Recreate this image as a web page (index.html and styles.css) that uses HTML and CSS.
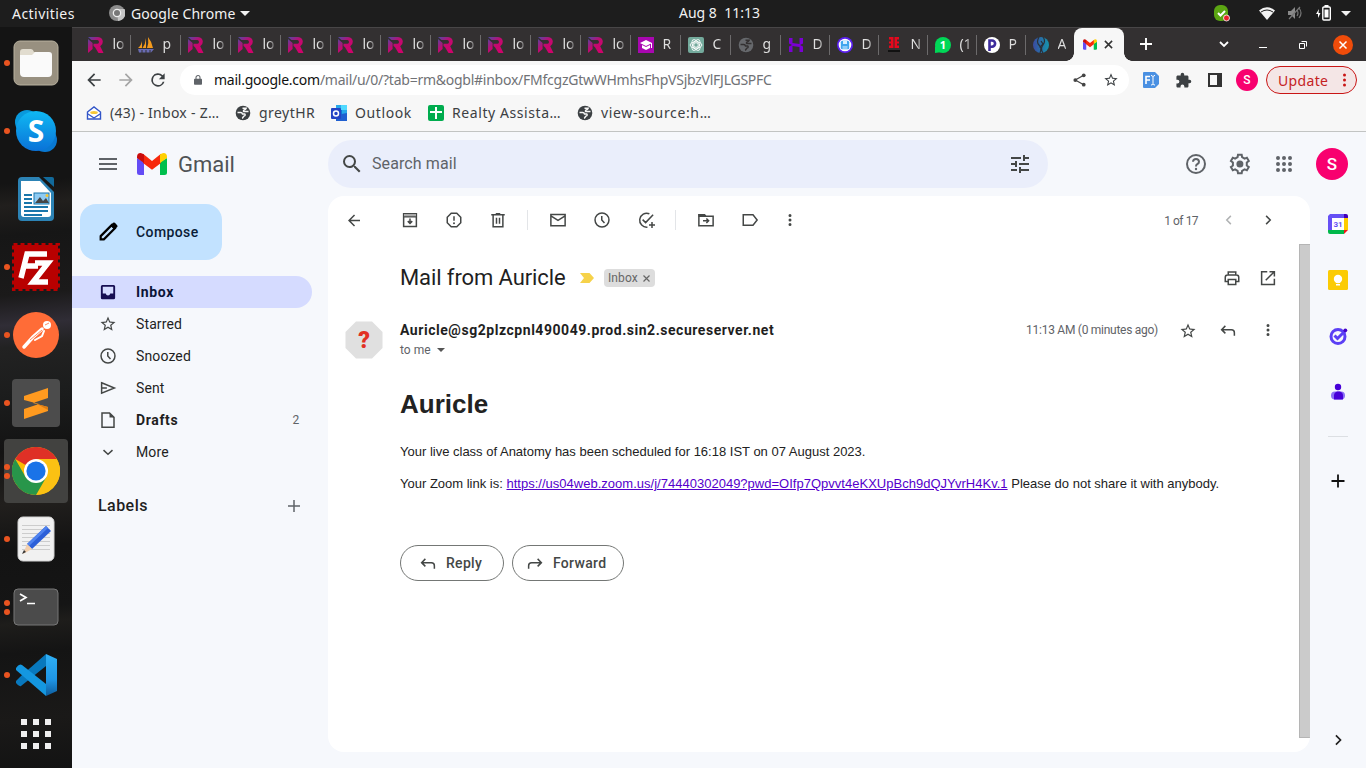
FILE: index.html
```html
<!DOCTYPE html>
<html lang="en">
<head>
<meta charset="utf-8">
<title>Mail from Auricle - Gmail</title>
<link rel="stylesheet" href="styles.css">
</head>
<body>
<svg class="defs" aria-hidden="true">
  <defs>
    <linearGradient id="rg" x1="0" y1="0" x2="1" y2="1"><stop offset="0" stop-color="#4a4ba6"/><stop offset=".45" stop-color="#c00a70"/><stop offset="1" stop-color="#d4006a"/></linearGradient>
    <linearGradient id="skype" x1="0" y1="0" x2="0" y2="1"><stop offset="0" stop-color="#0fb9f3"/><stop offset="1" stop-color="#0a72d8"/></linearGradient>
    <linearGradient id="auric"><stop offset="0" stop-color="#3b4aa0"/><stop offset="1" stop-color="#1594ad"/></linearGradient>
    <linearGradient id="code" x1="0" y1="0" x2="0" y2="1"><stop offset="0" stop-color="#2fb0f5"/><stop offset=".6" stop-color="#1f96e6"/><stop offset="1" stop-color="#0d5c9c"/></linearGradient>
  </defs>
  <symbol id="i-r" viewBox="0 0 16 16"><path fill="url(#rg)" fill-rule="evenodd" d="M0 0h10q4.800 .5 4.800 4.800 0 3.200-2.600 4.500l3.300 6.700h-5L7 10.300 5.500 9V6.700h4q1.500-.4 1.500-1.800T9.500 3.100H3.500zM0 2l4.600 4V12L0 16z"/></symbol>
  <symbol id="i-globe" viewBox="0 0 16 16"><circle cx="8" cy="8" r="7.300" fill="currentColor"/><path class="globe-land" d="M7.500 3.200h3.800q-.3 1.500-2.300 1.800-1 .8-.3 1.500h4.800M2.500 7.500h3.200q1.500 0 1.800 1.500h2q1 .3.500 1.500l-1.500 1q-.5 1.500-1.500 1.700"/></symbol>
  <symbol id="i-gm" viewBox="0 0 30 22"><path fill="#644cf5" d="M0 5 7 9v13H2.500Q0 22 0 19.500z"/><path fill="#00bf4d" d="m23 9 7-4v14.500q0 2.500-2.500 2.500H23z"/><path fill="#f7290c" d="M6 0.800 15 8l9-7.200V10l-9 6.800L6 10z"/><path fill="#c90c0c" d="M0 4Q0 0 3.500 0 5 0 7 1.500V10L0 5z"/><path fill="#ffd000" d="M30 4Q30 0 26.500 0 25 0 23 1.500V10l7-5z"/></symbol>
  <symbol id="i-back" viewBox="0 0 24 24"><path fill="currentColor" d="M20 11H7.830l5.590-5.590L12 4l-8 8 8 8 1.410-1.410L7.830 13H20v-2z"/></symbol>
  <symbol id="i-star" viewBox="0 0 24 24"><path fill="currentColor" d="M22 9.240l-7.190-.62L12 2 9.190 8.630 2 9.240l5.460 4.730L5.820 21 12 17.270 18.180 21l-1.630-7.030L22 9.240zM12 15.400l-3.760 2.270 1-4.280-3.320-2.880 4.380-.38L12 6.100l1.710 4.040 4.380.38-3.320 2.880 1 4.280L12 15.400z"/></symbol>
  <symbol id="i-clock" viewBox="0 0 24 24"><g class="line"><circle cx="12" cy="12" r="9.300"/><path d="M11.700 6.500V12l3.600 4"/></g></symbol>
  <symbol id="i-more" viewBox="0 0 24 24"><path fill="currentColor" d="M12 8a2 2 0 1 0 0-4 2 2 0 0 0 0 4zm0 2a2 2 0 1 0 0 4 2 2 0 0 0 0-4zm0 6a2 2 0 1 0 0 4 2 2 0 0 0 0-4z"/></symbol>
  <symbol id="i-right" viewBox="0 0 24 24"><path class="line" d="m9.500 6.500 5.500 5.500-5.500 5.500"/></symbol>
  <symbol id="i-reply" viewBox="0 0 24 24"><path class="line" d="M8.500 6.500 3.500 11.500l5 5M3.500 11.500h13q4 0 4 4v4"/></symbol>
  <symbol id="i-plus" viewBox="0 0 24 24"><path class="line" d="M12 4v16M4 12h16"/></symbol>
</svg>

<header class="topbar">
  <span class="activities">Activities</span>
  <svg class="tb-chrome" viewBox="0 0 16 16"><circle cx="8" cy="8" r="8" fill="#8c8c8c"/><path d="M8 4h7.500A8 8 0 0 1 9 16z" fill="#c4c4c4"/><circle cx="8" cy="8" r="4.300" fill="#eee"/><circle cx="8" cy="8" r="3" fill="#777"/></svg>
  <span class="appname">Google Chrome</span>
  <i class="caret"></i>
  <span class="clock">Aug 8&nbsp; 11:13</span>
  <div class="tray">
    <svg width="17" height="17" viewBox="0 0 17 17"><rect x="1" y="0" width="14" height="16" rx="6" fill="#5ba512"/><path d="m5 8 2.500 2.500L12 6" stroke="#fff" stroke-width="2" fill="none"/><circle cx="13.500" cy="13" r="3" fill="#e8202a" stroke="#fff" stroke-width=".8"/></svg>
    <svg class="wifi" width="16" height="13" viewBox="0 0 16 13"><path fill="#f2f2f2" d="M0 3.500Q8-3 16 3.500L8 13z"/><path d="M2 5Q8 1 14 5" fill="none" stroke="#1d1d1d"/></svg>
    <svg class="vol" width="15" height="14" viewBox="0 0 15 14"><path fill="#8a8a8a" d="M0 5h3l4-4v12L3 9H0z"/><path d="M9 4q2 3 0 6M11 2q4 5 0 10M1 13 12 1" fill="none" stroke="#777" stroke-width="1.200"/></svg>
    <svg class="batt" width="15" height="16" viewBox="0 0 15 16"><path fill="#fff" d="M3 4 0 9h2v4l2.500-5h-2z"/><rect x="6.800" y="2" width="7.500" height="13" rx="1" fill="none" stroke="#fff" stroke-width="1.400"/><path fill="#fff" d="M8.500 4.500h4v8h-4zM8.500 0h4v2h-4z"/></svg>
    <i class="caret"></i>
  </div>
</header>

<div class="desktop">
  <nav class="dock">
    <div class="app run"><svg width="46" height="46" viewBox="0 0 46 46"><rect x="1" y="1" width="44" height="44" rx="6" fill="#989080" stroke="#b9b29f"/><path fill="#e1dccf" d="M7 12q0-3 3-3h8q2 0 3 3h2v6H7z"/><path fill="#fafafa" d="M7 15h12l3-3h14q3 0 3 3v18q0 4-4 4H11q-4 0-4-4z"/></svg></div>
    <div class="app run"><svg width="42" height="42" viewBox="0 0 42 42"><circle cx="12" cy="12" r="12" fill="#0999dd"/><circle cx="30" cy="30" r="12" fill="#0878d2"/><circle cx="21" cy="21" r="20" fill="url(#skype)"/><text x="21" y="32" class="skype-s">S</text></svg></div>
    <div class="app"><svg width="38" height="46" viewBox="0 0 38 46"><path fill="#2c83b5" d="M5 1h17l15 15v25q0 4-4 4H5q-4 0-4-4V5q0-4 4-4z"/><path fill="#126a9b" d="M26 1h9q2 0 2 2v8z"/><path fill="#fff" d="M4 5h19l11 12v21q0 3-3 3H7q-3 0-3-3z"/><path stroke="#1976ab" stroke-width="2" d="M7 19h8M7 23h8M7 27h8M7 31h24M7 35h24M7 39h18"/><rect x="17" y="17" width="15" height="11" fill="#8ecbf3" stroke="#1976ab"/><path fill="#454545" d="m18 27 5-6 3 4 3-3 3 5z"/><circle cx="30" cy="19.500" r="1.500" fill="#f4c430"/></svg></div>
    <div class="app run"><svg width="48" height="48" viewBox="0 0 48 48"><rect x="2" y="2" width="44" height="44" fill="#b80000"/><rect x="1.500" y="1.500" width="45" height="45" fill="none" stroke="#b80000" stroke-width="3" stroke-dasharray="4 3"/><path class="fz" d="M35 11H15L9 35M12 23h14M23 20h13L21 39h15"/></svg></div>
    <div class="app run"><svg width="46" height="46" viewBox="0 0 46 46"><circle cx="23" cy="23" r="23" fill="#ff6c37"/><circle cx="34" cy="13" r="4" fill="#fff"/><path d="m29 17-9 8-9 10" stroke="#fff" stroke-width="3.500" stroke-linecap="round" fill="none"/><path d="m31 19-2 5-7 4" stroke="#fff" stroke-width="2" stroke-linecap="round" fill="none"/><path d="m17 28 12-10M32 13l4-2" stroke="#ff6c37" stroke-width=".8"/></svg></div>
    <div class="app run"><svg width="48" height="48" viewBox="0 0 48 48"><rect width="48" height="48" rx="4" fill="#4c4c4c"/><path fill="#ff9a1f" d="m12 17 24-8v10l-15 5 15 4v4l-24 8V30l15-5-15-4z"/><path fill="#dd7d15" d="m25 25 11 3v3z"/></svg></div>
    <div class="app run2 active"><svg width="48" height="48" viewBox="0 0 48 48"><circle cx="24" cy="24" r="24" fill="#fbbc05"/><path fill="#df3026" d="M24 24 3.200 12A24 24 0 0 1 44.800 12z"/><path fill="#fbc113" d="M24 12h20.800A24 24 0 0 1 24 48l10.400-18z"/><path fill="#28964a" d="M3.200 12 13.600 30 24 36 34.400 30 24 48A24 24 0 0 1 3.200 12z"/><circle cx="24" cy="24" r="12" fill="#fff"/><circle cx="24" cy="24" r="9.600" fill="#1a73e8"/></svg></div>
    <div class="app run"><svg width="38" height="46" viewBox="0 0 38 46"><rect x="1" y="1" width="36" height="44" rx="5" fill="#f1f1f1" stroke="#d3d3d3"/><path stroke="#ccc" d="M5 9.500h28M5 13.500h28M5 17.500h28M5 21.500h28M5 25.500h28M5 29.500h28M5 33.500h28"/><path fill="#2c5fd8" d="m10 28 19-18 5 5-19 18z"/><path fill="#4f83ef" d="m10 28 19-18 2 2-19 18z"/><path fill="#f2cfae" d="m10 28 5 5-9 5z"/><path fill="#333" d="m7 34 2 2-4 2z"/></svg></div>
    <div class="app run2"><svg width="46" height="38" viewBox="0 0 46 38"><rect x="1" y="1" width="44" height="36" rx="4" fill="#4b4b4b" stroke="#777"/><path d="m7 6 6 3.500L7 13M14 15.500h8" stroke="#fff" stroke-width="1.700" fill="none"/></svg></div>
    <div class="app run"><svg width="42" height="42" viewBox="0 0 42 42"><path fill="#0878bd" d="m1 27 5-5L31 0v12L6 32q-2 1-5-3z"/><path fill="#1497e0" d="M1 14q3-5 6-3l24 19v12L1 16z"/><path fill="url(#code)" d="m31 0 11 5v32l-11 5z"/></svg></div>
    <div class="app last"><svg width="30" height="30" viewBox="0 0 30 30"><path fill="#efefef" d="M0 0h6v6H0zM12 0h6v6h-6zM24 0h6v6h-6zM0 12h6v6H0zM12 12h6v6h-6zM24 12h6v6h-6zM0 24h6v6H0zM12 24h6v6h-6zM24 24h6v6h-6z"/></svg></div>
  </nav>

  <main class="browser">
    <div class="tabs">
      <div class="tab"><svg><use href="#i-r"/></svg><span>lo</span></div>
      <div class="tab"><svg viewBox="0 0 16 16"><path fill="#f59b1d" d="M4 4v7H0q3-2 4-7zM8 1v10H4.500Q7.500 7 8 1zM10 0q4 5 5 11H9q2-5 1-11z"/><path fill="#6a6cb4" d="M0 12h16l-3 3.500H1z"/><path stroke="#333031" d="M4 13v3M8 13v3M12 13v3"/></svg><span>p</span></div>
      <div class="tab"><svg><use href="#i-r"/></svg><span>lo</span></div>
      <div class="tab"><svg><use href="#i-r"/></svg><span>lo</span></div>
      <div class="tab"><svg><use href="#i-r"/></svg><span>lo</span></div>
      <div class="tab"><svg><use href="#i-r"/></svg><span>lo</span></div>
      <div class="tab"><svg><use href="#i-r"/></svg><span>lo</span></div>
      <div class="tab"><svg><use href="#i-r"/></svg><span>lo</span></div>
      <div class="tab"><svg><use href="#i-r"/></svg><span>lo</span></div>
      <div class="tab"><svg><use href="#i-r"/></svg><span>lo</span></div>
      <div class="tab"><svg><use href="#i-r"/></svg><span>lo</span></div>
      <div class="tab"><svg viewBox="0 0 16 16"><path fill="#a907b1" d="M0 0h16v16H0z"/><path fill="#fff" d="m8 3 6 3-6 3-6-3zM4 8l4 2 4-2v3l-4 2-4-2zM13 6h1v5h-1z"/></svg><span>R</span></div>
      <div class="tab"><svg viewBox="0 0 16 16"><rect width="16" height="16" rx="2" fill="#74aa9c"/><g fill="none" stroke="#fff" stroke-width=".9"><circle cx="8" cy="8" r="2.300"/><ellipse cx="8" cy="8" rx="5.800" ry="3.300"/><ellipse cx="8" cy="8" rx="5.800" ry="3.300" transform="rotate(60 8 8)"/><ellipse cx="8" cy="8" rx="5.800" ry="3.300" transform="rotate(120 8 8)"/></g></svg><span>C</span></div>
      <div class="tab dim"><svg><use href="#i-globe"/></svg><span>g</span></div>
      <div class="tab n"><svg viewBox="0 0 16 16"><path fill="#7b00d4" d="M1 1h3.500v5l7 1V1H15v5.500L12 8l3 1.500V15h-3.500v-5l-7-1v6H1V9.500L4 8 1 6.500z"/></svg><span>D</span></div>
      <div class="tab n"><svg viewBox="0 0 16 16"><circle cx="8" cy="8" r="8" fill="#5b20f0"/><circle cx="8" cy="8" r="6.300" fill="#fff"/><rect x="3.800" y="3.800" width="8.400" height="8.400" rx="1.500" fill="#42a5ee"/><path fill="#d7efff" d="M6 4h4v3H6z"/><path fill="#8fcbf8" d="M5.500 9h5v3h-5z"/></svg><span>D</span></div>
      <div class="tab n"><svg viewBox="0 0 16 16"><path fill="#e5081d" d="M3 0h4.500v11H3V8.500h2v-2H3v-2h2v-2H3zM8.500 0H13v2.500h-2v2h2v2h-2v2h2V11H8.500z"/><path fill="#111" d="M2 13h12v2H2z"/></svg><span>N</span></div>
      <div class="tab n"><svg viewBox="0 0 16 16"><circle cx="8" cy="8" r="8" fill="#00d757"/><path fill="#00d757" d="M0 16V9l7 6z"/><text x="8" y="12" class="fav-t" fill="#fff">1</text></svg><span>(1</span></div>
      <div class="tab n"><svg viewBox="0 0 16 16"><circle cx="8" cy="8" r="8" fill="#fff"/><path d="M5.500 14V3.500H8a3 3 0 0 1 0 6.200H5" fill="none" stroke="#3d2c9c" stroke-width="2.600"/></svg><span>P</span></div>
      <div class="tab n nosep"><svg viewBox="0 0 16 16"><circle cx="8" cy="8" r="8" fill="url(#auric)"/><path d="M6 0q-3 5 0 8t1 8M10 0q3 4 0 8t0 8M8 4l2 3-3 3 2 3" stroke="#2a3038" fill="none" stroke-width="1.200"/></svg><span>A</span></div>
      <div class="tab current"><svg class="gm"><use href="#i-gm"/></svg><svg class="x" viewBox="0 0 10 10"><path d="m1 1 8 8M9 1 1 9" stroke="#333" stroke-width="1.700"/></svg></div>
      <svg class="newtab" viewBox="0 0 12 12"><path d="M6 0v12M0 6h12" stroke="#fff" stroke-width="1.900"/></svg>
      <div class="wincontrols">
        <svg width="10" height="7" viewBox="0 0 10 7"><path d="m1 1 4 4 4-4" fill="none" stroke="#fff" stroke-width="1.800"/></svg>
        <svg width="8" height="8" viewBox="0 0 8 8"><path d="M0 6.500h8" stroke="#fff"/></svg>
        <svg width="8" height="8" viewBox="0 0 8 8"><path d="M.5 2.500h5v5h-5zM2.500.5h5v5" fill="none" stroke="#fff"/></svg>
        <svg width="20" height="20" viewBox="0 0 20 20"><circle cx="10" cy="10" r="10" fill="#f04c0a"/><path d="m6.500 6.500 7 7m0-7-7 7" stroke="#fff" stroke-width="1.500"/></svg>
      </div>
    </div>

    <div class="toolbar">
      <svg class="nav"><use href="#i-back"/></svg>
      <svg class="nav fwd"><use href="#i-back"/></svg>
      <svg class="nav" viewBox="0 0 24 24"><path fill="currentColor" d="M17.650 6.350A8 8 0 1 0 19.730 14h-2.080A6 6 0 1 1 12 6c1.660 0 3.140.69 4.220 1.780L13 11h7V4z"/></svg>
      <div class="urlbar">
        <svg class="lock" viewBox="0 0 10 12"><path fill="#5f6368" d="M1 4.500h8q1 0 1 1V11q0 1-1 1H1q-1 0-1-1V5.500q0-1 1-1z"/><path d="M2.500 5V3a2.500 2.500 0 0 1 5 0v2" fill="none" stroke="#5f6368" stroke-width="1.300"/></svg>
        <span class="url"><b>mail.google.com</b>/mail/u/0/?tab=rm&amp;ogbl#inbox/FMfcgzGtwWHmhsFhpVSjbzVlFJLGSPFC</span>
        <svg class="u16 share" viewBox="0 0 16 16"><path d="M12.500 3 3.500 8l9 5" fill="none" stroke="#444" stroke-width="1.300"/><circle cx="12.500" cy="3" r="2" fill="#444"/><circle cx="3.500" cy="8" r="2" fill="#444"/><circle cx="12.500" cy="13" r="2" fill="#444"/></svg>
        <svg class="u16"><use href="#i-star"/></svg>
      </div>
      <div class="exts">
        <svg width="16" height="16" viewBox="0 0 16 16"><path fill="#4a90e2" d="M1 0h11l4 4v8l-4 4H1q-1 0-1-1V1q0-1 1-1z"/><path d="M3 12V4.500h4M3 8h4" fill="none" stroke="#fff" stroke-width="1.600"/><path d="M8 3.500q1.500 0 2 1 .5-1 2-1M8 13q1.500 0 2-1 .5 1 2 1M10 4v8" fill="none" stroke="#fff"/></svg>
        <svg width="17" height="17" viewBox="0 0 24 24"><path fill="#3c4043" d="M20.500 11H19V7c0-1.100-.9-2-2-2h-4V3.500a2.500 2.500 0 0 0-5 0V5H4c-1.100 0-2 .9-2 2v3.800h1.500a2.700 2.700 0 0 1 0 5.400H2V20c0 1.100.9 2 2 2h3.800v-1.500a2.700 2.700 0 0 1 5.400 0V22H17c1.100 0 2-.9 2-2v-4h1.500a2.500 2.500 0 0 0 0-5z"/></svg>
        <svg width="14" height="14" viewBox="0 0 14 14"><path fill="#333" fill-rule="evenodd" d="M0 0h14v14H0zm2 2v10h7V2z"/></svg>
        <span class="avatar small">S</span>
        <span class="update">Update<svg width="15" height="20" viewBox="0 0 15 20"><g fill="#c91616"><circle cx="7.500" cy="5" r="1.500"/><circle cx="7.500" cy="10" r="1.500"/><circle cx="7.500" cy="15" r="1.500"/></g></svg></span>
      </div>
    </div>

    <div class="bookmarks">
      <span class="bm b1"><svg viewBox="0 0 16 16"><path d="M1.500 7 8 2l6.500 5v7h-13z" fill="#fff" stroke="#3255c8" stroke-width="1.400"/><path d="m2 9 6 4 6-4" stroke="#3255c8" stroke-width="1.300" fill="none"/><ellipse cx="8" cy="7.500" rx="3.800" ry="1.500" fill="#f6c739"/></svg>(43) - Inbox - Z…</span>
      <span class="bm b2"><svg><use href="#i-globe"/></svg>greytHR</span>
      <span class="bm b3"><svg viewBox="0 0 16 16"><path fill="#28a8ea" d="M5 0h11v15H5z"/><path fill="#0f78d4" d="M5 4h6v5H5z"/><path fill="#50d9ff" d="M10 0h6v5h-6z"/><path fill="#1f5fd0" d="m5 10 11-2v8H5z"/><rect y="3" width="10" height="11" rx="1" fill="#2444c4"/><circle cx="5" cy="8.500" r="2.500" fill="none" stroke="#fff" stroke-width="1.500"/></svg>Outlook</span>
      <span class="bm b4"><svg viewBox="0 0 16 16"><rect width="16" height="16" rx="2" fill="#00ac4e"/><path fill="#fff" d="M2 6h5V2h2v4h5v2H9v6H7V8H2z"/></svg>Realty Assista…</span>
      <span class="bm b5"><svg><use href="#i-globe"/></svg>view-source:h…</span>
    </div>

    <div class="gmail">
      <aside class="side">
        <div class="brand">
          <svg width="20" height="14" viewBox="0 0 20 14"><path d="M1 2h18M1 7h18M1 12h18" stroke="#5f6368" stroke-width="2"/></svg>
          <svg class="logo"><use href="#i-gm"/></svg>
          <span class="gword">Gmail</span>
        </div>
        <div class="compose"><svg viewBox="0 0 24 24"><path d="M4 16.500 16 4.500l3.500 3.500-12 12H4z" fill="none" stroke="#000" stroke-width="2.400"/><path d="m14.500 5 3-3q1-1 2 0l2.500 2.500q1 1 0 2l-3 3z"/></svg><span>Compose</span></div>
        <ul class="folders">
          <li class="sel"><svg viewBox="0 0 24 24"><path fill="#170e52" fill-rule="evenodd" d="M4.500 2.500h15q2 0 2 2v15q0 2-2 2h-15q-2 0-2-2v-15q0-2 2-2zM5 5v9h4q.5 2.500 3 2.500t3-2.500h4V5z"/></svg><span>Inbox</span></li>
          <li><svg><use href="#i-star"/></svg><span>Starred</span></li>
          <li><svg><use href="#i-clock"/></svg><span>Snoozed</span></li>
          <li><svg viewBox="0 0 24 24"><path class="line" d="m3.500 5 17 7-17 7zm0 7h7"/></svg><span>Sent</span></li>
          <li class="bold"><svg viewBox="0 0 24 24"><path class="line" d="M4 2.500h10l6 6v13H4z"/><path d="M14 2.500v6h6z" fill="#444746"/></svg><span>Drafts</span><em>2</em></li>
          <li><svg viewBox="0 0 24 24"><path class="line" d="m6 9.500 6 5.500 6-5.500"/></svg><span>More</span></li>
        </ul>
        <div class="labels"><span>Labels</span><svg width="18" height="18"><use href="#i-plus"/></svg></div>
      </aside>

      <div class="center">
        <div class="ghead">
          <div class="search">
            <svg viewBox="0 0 24 24"><path fill="currentColor" d="M15.500 14h-.79l-.28-.27A6.470 6.470 0 0 0 16 9.500 6.500 6.500 0 1 0 9.500 16c1.610 0 3.090-.59 4.230-1.570l.27.28v.79l5 4.990L20.490 19l-4.990-5zm-6 0a4.500 4.500 0 1 1 0-9 4.500 4.500 0 0 1 0 9z"/></svg>
            <span>Search mail</span>
            <svg class="tune" viewBox="0 0 24 24"><path fill="currentColor" d="M3 17v2h6v-2H3zM3 5v2h10V5H3zm10 16v-2h8v-2h-8v-2h-2v6h2zM7 9v2H3v2h4v2h2V9H7zm14 4v-2H11v2h10zm-6-4h2V7h4V5h-4V3h-2v6z"/></svg>
          </div>
          <div class="gtools">
            <svg viewBox="0 0 24 24"><circle class="line" cx="12" cy="12" r="9"/><path class="line" d="M9 9.800q.2-2.800 3-2.800t3 2.700q0 1.500-1.700 2.500-1.300.8-1.300 2.300"/><circle cx="12" cy="17" r="1.200" fill="currentColor"/></svg>
            <svg viewBox="0 0 24 24"><path class="line" d="M18.800 13.500v-3l2-1.500-1.900-3.300-2.300 1-2.500-1.500-.4-2.400H10l-.4 2.400L7.100 6.700l-2.300-1L2.900 9l2 1.500v3l-2 1.500 1.900 3.300 2.300-1 2.500 1.500.4 2.400h3.700l.4-2.400 2.500-1.500 2.300 1 1.900-3.300z"/><circle cx="11.900" cy="12" r="3.500" fill="currentColor"/></svg>
            <svg viewBox="0 0 24 24"><path fill="none" stroke="currentColor" stroke-width="4" stroke-linecap="round" d="M6 6h0M12 6h0M18 6h0M6 12h0M12 12h0M18 12h0M6 18h0M12 18h0M18 18h0"/></svg>
            <span class="avatar">S</span>
          </div>
        </div>
        <div class="body-row">
          <section class="card">
            <div class="actions">
              <svg><use href="#i-back"/></svg>
              <svg class="a1" viewBox="0 0 24 24"><path class="line" d="M3.500 3.500h17v17h-17zM3.500 7.500h17M12 10v6M9 13.500l3 3 3-3"/><path fill="#aaa" d="M4 4h16v3H4z"/></svg>
              <svg class="a2" viewBox="0 0 24 24"><path class="line" d="M8.300 3h7.400L21 8.300v7.400L15.700 21H8.300L3 15.700V8.300zM12 7v6"/><circle cx="12" cy="16.300" r="1.300" fill="currentColor"/></svg>
              <svg class="a2" viewBox="0 0 24 24"><path class="line" d="M5.500 6v15h13V6M3 5h18M9 3.500h6M10 9v8M14 9v8"/></svg>
              <i class="sep"></i>
              <svg class="a3" viewBox="0 0 24 24"><path class="line" d="M2.500 4.500h19v15h-19zm0 2 9.500 6 9.500-6"/></svg>
              <svg class="a2"><use href="#i-clock"/></svg>
              <svg class="a2" viewBox="0 0 24 24"><path class="line" d="M16.500 3.700A9.300 9.300 0 1 0 14 21.500M7.500 11.500l4 4L21.500 5M20 14.500v8M16 18.500h8"/></svg>
              <i class="sep"></i>
              <svg class="a3" viewBox="0 0 24 24"><path class="line" d="M2.500 5H10l2 2h9.500v12.500h-19zM8 13h7M12.500 10l3 3-3 3"/><path fill="currentColor" d="M2 4h8l3 4H2z"/></svg>
              <svg class="a2" viewBox="0 0 24 24"><path class="line" d="M3 5h13l5.500 7-5.500 7H3z"/></svg>
              <svg class="a4"><use href="#i-more"/></svg>
              <span class="count">1 of 17</span>
              <svg class="prev"><use href="#i-right"/></svg>
              <svg class="next"><use href="#i-right"/></svg>
            </div>
            <div class="scroll">
              <div class="message">
                <div class="subject">
                  <h2>Mail from Auricle</h2>
                  <svg class="imp" viewBox="0 0 14 10"><path fill="#f6d24a" d="M0 0h9.500L14 5l-4.500 5H0l4-5z"/></svg>
                  <span class="chip">Inbox<svg width="7" height="7" viewBox="0 0 7 7"><path d="m.5.500 6 6m0-6-6 6" stroke="#666" stroke-width="1.200"/></svg></span>
                  <svg class="print" viewBox="0 0 24 24"><path class="line" d="M7 8V4h10v4M6 16.500H3V11q0-3 3-3h12q3 0 3 3v5.500h-3M7 14h10v6.500H7z"/></svg>
                  <svg class="open" viewBox="0 0 24 24"><path class="line" d="M11 3.500H3.500v17h17V13M14 3.500h6.500V10M20 4 9 15"/></svg>
                </div>
                <div class="from">
                  <svg class="who" viewBox="0 0 38 38"><path fill="#e0e0e0" d="M11 .5h16L37.500 11v16L27 37.500H11L.5 27V11z"/><text x="19" y="27" class="q">?</text></svg>
                  <div class="addr"><strong>Auricle@sg2plzcpnl490049.prod.sin2.secureserver.net</strong><span class="tome">to me <i></i></span></div>
                  <span class="time">11:13 AM (0 minutes ago)</span>
                  <svg class="f1"><use href="#i-star"/></svg>
                  <svg class="f2"><use href="#i-reply"/></svg>
                  <svg class="f3"><use href="#i-more"/></svg>
                </div>
                <article>
                  <h1>Auricle</h1>
                  <p>Your live class of Anatomy has been scheduled for 16:18 IST on 07 August 2023.</p>
                  <p>Your Zoom link is: <a href="#">https://us04web.zoom.us/j/74440302049?pwd=OIfp7Qpvvt4eKXUpBch9dQJYvrH4Kv.1</a> Please do not share it with anybody.</p>
                </article>
                <div class="replies">
                  <button class="reply"><svg><use href="#i-reply"/></svg><span>Reply</span></button>
                  <button class="forward"><svg class="flip"><use href="#i-reply"/></svg><span>Forward</span></button>
                </div>
              </div>
              <div class="bar"></div>
            </div>
          </section>
          <aside class="panel">
            <svg viewBox="0 0 20 20"><path fill="#fff" d="M4 4h12v12H4z"/><path fill="#6650f5" d="M2 0h14v4H4v12H0V2z"/><path fill="#4200b8" d="M16 0h2q2 0 2 2v2h-4z"/><path fill="#fc0" d="M16 4h4v12h-4z"/><path fill="#00b84a" d="M0 16h16v4H2q-2 0-2-2z"/><path fill="#f31818" d="M16 16h4l-4 4z"/><text x="10" y="13" class="cal">31</text></svg>
            <svg viewBox="0 0 20 20"><rect width="20" height="20" rx="1.500" fill="#fbcb04"/><circle cx="10" cy="9" r="4.200" fill="#fff"/><path fill="#fff" d="M8 11h4v2H8zM8 14h4v1.500H8z"/></svg>
            <svg viewBox="0 0 20 20"><circle cx="10" cy="10.500" r="7" fill="none" stroke="#5b3ff5" stroke-width="3"/><path d="m6.500 9.500 3 3 8-8" fill="none" stroke="#5b3ff5" stroke-width="3"/><circle cx="17.300" cy="4.300" r="1.900" fill="#4400c8"/></svg>
            <svg viewBox="0 0 20 20"><circle cx="10" cy="5" r="3.200" fill="#4700d8"/><rect x="3" y="9.500" width="14" height="8" rx="4" fill="#8a70f5"/><path fill="#4700d8" d="M9 9.500h3q3 1 3 4v4H6v-4q0-3 3-4z"/></svg>
            <i></i>
            <svg class="add" viewBox="0 0 20 20"><path d="M10 3.500v13M3.500 10h13" stroke="#111" stroke-width="1.800"/></svg>
            <svg class="collapse"><use href="#i-right"/></svg>
          </aside>
        </div>
      </div>
    </div>
  </main>
</div>
</body>
</html>
```
FILE: styles.css
```css
* { box-sizing: border-box; }
body { margin: 0; width: 1366px; height: 768px; overflow: hidden; display: flex; flex-direction: column; font-family: Roboto, "Liberation Sans", sans-serif; color: #1f1f1f; }
svg { display: block; flex: none; }
.defs { position: absolute; width: 0; height: 0; }
.line { fill: none; stroke: currentColor; stroke-width: 2; }
.globe-land { fill: none; stroke: var(--land, #f7f7f7); stroke-width: 1.4; }

/* desktop bar */
.topbar { height: 27px; flex: none; background: #1d1d1d; color: #f2f2f2; display: flex; align-items: center; position: relative; font: 14px "Noto Sans", sans-serif; padding: 0 0 1px 12px; }
.activities { width: 97px; letter-spacing: .45px; }
.tb-chrome { width: 16px; height: 16px; margin-right: 6px; }
.appname { width: 109px; letter-spacing: .08px; }
.caret { border: 5px solid transparent; border-top-color: #f2f2f2; border-bottom: 0; }
.clock { position: absolute; left: 679px; top: 3px; }
.tray { margin-left: auto; display: flex; align-items: center; padding-right: 15px; }
.wifi { margin-left: 29px; }
.vol { margin-left: 13px; }
.batt { margin-left: 13px; margin-right: 10px; }

.desktop { flex: 1; display: flex; min-height: 0; }
.dock { width: 72px; flex: none; padding-top: 2px; background: linear-gradient(175deg, #141414 0 21%, #211f1d 24%, #161616 28%, #1b1a1a 36%, #302d36 40%, #222222 43%, #1b1c1c 50%, #131313 57%, #211f1d 64%, #131313 70%, #151515 78%, #1e1d1b 80%, #141414 84%, #1a1918 93%, #131313); }
.app { height: 68px; display: flex; align-items: center; justify-content: center; position: relative; }
.app.last { height: 50px; }
.app.active { background: #424240; height: 64px; margin: 2px 4px; border-radius: 4px; }
.run::before, .run2::before { content: ""; position: absolute; left: 4px; top: 31px; width: 6px; height: 6px; border-radius: 50%; background: #e95420; }
.run2::before { top: 27px; box-shadow: 0 9px 0 #e95420; }
.active::before { left: 0; top: 25px; }
.skype-s { font: bold 30px "Open Sans", sans-serif; fill: #fff; text-anchor: middle; }
.fz { fill: none; stroke: #fff; stroke-width: 5.5; }

/* browser */
.browser { flex: 1; min-width: 0; display: flex; flex-direction: column; background: #f7f7f7; font-family: "Noto Sans", sans-serif; }
.tabs { height: 34px; flex: none; background: #333031; border-top: 1px solid #484647; display: flex; padding-left: 8px; }
.tab { width: 50px; height: 33px; display: flex; align-items: center; padding-left: 7.5px; position: relative; color: #dfdfdf; font-size: 14px; }
.tab.n { width: 49px; }
.tab svg { width: 16px; height: 16px; }
.tab span { margin-left: 9px; white-space: nowrap; -webkit-mask-image: linear-gradient(90deg, #000 6px, transparent 13px); mask-image: linear-gradient(90deg, #000 6px, transparent 13px); margin-top: -2px; }
.tab::after { content: ""; position: absolute; right: -1px; top: 7px; width: 1px; height: 20px; background: #6c6a6b; }
.tab.nosep::after, .tab.current::after { display: none; }
.tab.dim svg { color: #66686c; --land: #333031; }
.tab.current { background: #f7f7f7; border-radius: 8px 8px 0 0; padding-left: 9px; }
.tab.current::before { content: ""; position: absolute; left: -8px; right: -8px; bottom: 0; height: 8px; background: radial-gradient(circle at 0 0, transparent 7.5px, #f7f7f7 8px) left/8px 8px no-repeat, radial-gradient(circle at 8px 0, transparent 7.5px, #f7f7f7 8px) right/8px 8px no-repeat; }
.tab svg.gm { width: 14px; height: 11px; }
.tab svg.x { width: 9px; height: 9px; margin-left: 7px; }
.newtab { width: 12px; height: 12px; margin: 10px 0 0 16px; }
.wincontrols { margin-left: auto; display: flex; align-items: center; padding-right: 13px; }
.wincontrols svg { margin-left: 30px; }
.wincontrols svg:nth-child(3) { margin-left: 32px; }
.wincontrols svg:nth-child(4) { margin-left: 26px; }

.toolbar { height: 38px; flex: none; display: flex; align-items: center; padding-left: 12px; }
.nav { width: 20px; height: 20px; margin-right: 12px; color: #3c4043; }
.fwd { color: #a5a5a5; transform: scaleX(-1); }
.urlbar { width: 949px; height: 30px; border-radius: 15px; background: #fff; display: flex; align-items: center; padding: 0 10px 0 14px; color: #3c4043; }
.lock { width: 8px; height: 12px; margin-right: 12px; }
.url { flex: 1; font-size: 14px; color: #707276; white-space: nowrap; letter-spacing: -.25px; margin-top: -2px; }
.url b { font-weight: 400; color: #111; }
.u16 { width: 16px; height: 16px; }
.share { margin-right: 16px; width: 15px; }
.exts { display: flex; align-items: center; padding-left: 14px; }
.exts > :nth-child(2) { margin-left: 16px; }
.exts > :nth-child(3) { margin-left: 16px; }
.avatar { width: 32px; height: 32px; border-radius: 50%; background: #f8006f; color: #fff; font: 500 17px/32px Roboto, sans-serif; text-align: center; flex: none; }
.avatar.small { width: 22px; height: 22px; font-size: 12px; line-height: 22px; margin-left: 14px; }
.update { margin-left: 8px; width: 91px; height: 28px; border: 1px solid #c91616; border-radius: 14px; background: #f4e6e6; color: #c5221f; font-size: 14px; display: flex; align-items: center; padding-left: 11px; justify-content: space-between; padding-right: 4px; letter-spacing: .35px; }

.bookmarks { height: 33px; flex: none; border-bottom: 1px solid #c2c4c3; display: flex; align-items: center; padding: 0 0 5px 14px; font-size: 14px; color: #3c4043; }
.bm { display: flex; align-items: center; white-space: nowrap; flex: none; }
.bm svg { width: 16px; height: 16px; margin-right: 8px; }
.b1 { width: 149px; letter-spacing: .27px; }
.b2 { width: 96px; letter-spacing: .45px; }
.b3 { width: 97px; letter-spacing: .6px; }
.b4 { width: 149px; letter-spacing: .58px; }
.b5 { letter-spacing: .65px; }

/* mail app */
.gmail { flex: 1; min-height: 0; display: flex; background: #f6f8fc; font-family: Roboto, sans-serif; color: #1f1f1f; }
.side { width: 256px; flex: none; }
.brand { height: 64px; display: flex; align-items: center; padding-left: 26px; }
.logo { width: 30px; height: 22px; margin-left: 19px; }
.gword { font-size: 22px; color: #505356; margin-left: 11px; }
.compose { width: 142px; height: 56px; margin: 8px 0 16px 8px; border-radius: 16px; background: #c2e2ff; display: flex; align-items: center; padding-left: 16px; font-size: 14px; font-weight: 500; color: #0b1d38; letter-spacing: .4px; }
.compose svg { width: 24px; height: 24px; margin-right: 16px; padding: 1px; }
.folders { list-style: none; margin: 0; padding: 0; }
.folders li { height: 32px; width: 240px; border-radius: 0 16px 16px 0; display: flex; align-items: center; padding: 0 12px 0 26px; font-size: 14px; letter-spacing: .12px; }
.folders svg { width: 20px; height: 20px; margin-right: 18px; color: #444746; padding: 1px; }
.folders em { margin-left: auto; font: 12px Roboto, sans-serif; color: #5f6368; }
.folders .sel { background: #d5dbff; color: #0b1538; font-weight: 700; letter-spacing: .65px; }
.folders .bold { font-weight: 700; letter-spacing: .65px; }
.labels { display: flex; width: 231px; height: 20px; align-items: center; justify-content: space-between; margin-top: 27px; padding-left: 26px; font-size: 16px; font-weight: 500; letter-spacing: .45px; }
.labels svg { color: #5f6368; margin-top: 2px; }

.center { flex: 1; min-width: 0; display: flex; flex-direction: column; }
.ghead { height: 64px; flex: none; display: flex; align-items: center; justify-content: space-between; padding-right: 18px; }
.search { width: 720px; height: 48px; border-radius: 24px; background: #eaeefb; display: flex; align-items: center; padding-left: 12px; color: #444746; font-size: 16px; }
.search svg { width: 24px; height: 24px; margin-top: -1px; }
.search span { flex: 1; margin: -2px 0 0 8px; color: #5f6368; letter-spacing: .1px; }
.search .tune { margin-right: 16px; }
.gtools { display: flex; align-items: center; color: #5f6368; }
.gtools svg { width: 24px; height: 24px; margin-right: 20px; }
.body-row { flex: 1; min-height: 0; display: flex; padding-bottom: 16px; }
.card { width: 982px; background: #fff; border-radius: 16px; display: flex; flex-direction: column; overflow: hidden; }
.actions { height: 48px; flex: none; display: flex; align-items: center; padding-left: 18px; color: #444746; }
.actions svg { width: 20px; height: 20px; padding: 1px; }
.actions > svg:first-child { margin-right: 2px; margin-left: -1px; padding: 0; width: 18px; height: 19px; }
.actions .a1 { margin-left: 35px; }
.actions .a2 { margin-left: 24px; }
.actions .a3 { margin-left: 20px; }
.actions .a4 { margin-left: 20px; }
.sep { width: 1px; height: 20px; background: #e3e5e8; margin-left: 19px; }
.count { margin-left: auto; font-size: 12px; color: #5f6368; letter-spacing: -.6px; word-spacing: .4px; margin-top: 2px; }
.actions .prev { transform: scaleX(-1); color: #b0b2b3; margin-left: 21px; }
.actions .next { margin: 0 32px 0 19px; }
.scroll { flex: 1; min-height: 0; display: flex; }
.message { flex: 1; min-width: 0; padding-left: 17px; }
.bar { width: 11px; height: 494px; background: #cbcbcb; border: 1px solid #b5b5b5; border-right: 0; }
.subject { display: flex; align-items: center; height: 68px; padding-left: 55px; }
h2 { margin: -2px 0 0; font-size: 22px; font-weight: 400; width: 180px; white-space: nowrap; letter-spacing: -.1px; }
.imp { width: 14px; height: 10px; }
.chip { width: 51px; height: 18px; background: #ddd; border-radius: 4px; margin-left: 10px; display: flex; align-items: center; justify-content: space-between; padding: 0 5px 0 4px; font-size: 12px; color: #666; letter-spacing: .1px; }
.subject .print, .subject .open { width: 20px; height: 20px; padding: 1px; color: #444746; }
.print { margin-left: auto; }
.subject .open { margin: 0 21px 0 16px; }
.from { display: flex; height: 56px; padding-top: 8px; color: #444746; }
.who { width: 38px; height: 38px; margin-top: 1px; }
.q { font: 900 23px Roboto, sans-serif; fill: #e23124; text-anchor: middle; }
.addr { margin-left: 17px; display: flex; flex-direction: column; }
.addr strong { font-size: 14px; line-height: 20px; color: #1f1f1f; white-space: nowrap; letter-spacing: .54px; }
.tome { font-size: 12px; line-height: 20px; color: #5f6368; display: flex; align-items: center; }
.tome i { border: 4px solid transparent; border-top-color: #555; border-bottom: 0; margin-left: 6px; }
.time { margin-left: auto; font-size: 12px; line-height: 20px; color: #5f6368; white-space: nowrap; letter-spacing: -.27px; }
.from .f1, .from .f2, .from .f3 { width: 18px; height: 18px; margin-top: 1px; }
.from .f1 { margin-left: 21px; margin-top: 2px; }
.from .f2 { margin-left: 22px; }
.from .f3 { margin: 1px 22px 0 22px; }
article { padding-left: 55px; font: 13px "Liberation Sans", sans-serif; color: #222; }
h1 { margin: 21px 0 23px; font-size: 26px; line-height: 30px; }
p { margin: 0 0 12px; line-height: 20px; }
a { color: #5500cc; letter-spacing: .013px; }
.replies { display: flex; gap: 8px; padding: 39px 0 0 55px; }
button { height: 36px; border: 1px solid #747775; border-radius: 18px; background: #fff; display: flex; align-items: center; padding: 0 0 0 18px; font: 500 14px Roboto, sans-serif; color: #444746; letter-spacing: .3px; }
button svg { width: 18px; height: 18px; margin-right: 9px; }
.reply { width: 104px; }
.forward { width: 112px; padding-left: 13px; }
.flip { transform: scaleX(-1); }
.panel { width: 56px; display: flex; flex-direction: column; align-items: center; padding-top: 18px; }
.panel svg { width: 20px; height: 20px; margin-bottom: 36px; }
.panel i { width: 20px; height: 1px; background: #dcdfe3; margin: -2px 0 34px; }
.panel .collapse { margin: auto 0 2px; }
.cal { font: 700 8px Roboto, sans-serif; fill: #6650f5; text-anchor: middle; }
.fav-t { font: bold 11px "Noto Sans", sans-serif; text-anchor: middle; }
```
